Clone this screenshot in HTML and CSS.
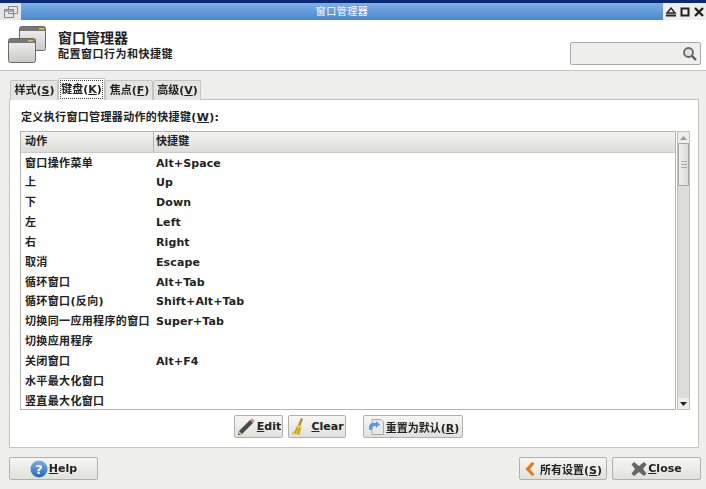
FILE: index.html
```html
<!DOCTYPE html>
<html lang="zh">
<head>
<meta charset="utf-8">
<title>窗口管理器</title>
<link rel="stylesheet" href="styles.css">
</head>
<body>
<div class="window">
  <div class="titlebar">
    <div class="tb-menu"><svg width="16" height="14" viewBox="0 0 16 14"><path d="M5.500 1.500h9v7h-9zM1.500 4.500h9v8h-9z" fill="none" stroke="#888" stroke-width="1"/><path d="M2 5h8v2H2z" fill="#aaa"/></svg></div>
    <div class="tb-title">窗口管理器</div>
    <div class="tb-btns">
      <svg width="12" height="12" viewBox="0 0 12 12"><path d="M6 2l4 5H2z" fill="none" stroke="#222" stroke-width="1.400"/><path d="M1 9.500h10" stroke="#222" stroke-width="2"/></svg>
      <svg width="12" height="12" viewBox="0 0 12 12"><path d="M2.500 2.500h7v7h-7z" fill="none" stroke="#222" stroke-width="2"/></svg>
      <svg width="12" height="12" viewBox="0 0 12 12"><path d="M2 2l8 8M10 2l-8 8" stroke="#222" stroke-width="2.400"/></svg>
    </div>
  </div>
  <header class="head">
    <svg class="head-icon" width="38" height="37" viewBox="0 0 38 37">
      <defs><linearGradient id="win" x1="0" y1="0" x2="0" y2="1"><stop offset="0" stop-color="#f4f4f2"/><stop offset="1" stop-color="#c8c8c6"/></linearGradient></defs>
      <rect x="11.500" y="0.500" width="26" height="24" rx="2" fill="url(#win)" stroke="#6a6a6a"/>
      <rect x="12" y="1" width="25" height="4" fill="#777"/>
      <rect x="31" y="2" width="5" height="1.500" fill="#e0c050"/>
      <rect x="0.500" y="12.500" width="27" height="24" rx="2" fill="url(#win)" stroke="#6a6a6a"/>
      <rect x="1" y="13" width="26" height="4" fill="#777"/>
      <rect x="20" y="14" width="5" height="1.500" fill="#e0c050"/>
    </svg>
    <div class="head-text">
      <div class="head-title">窗口管理器</div>
      <div class="head-sub">配置窗口行为和快捷键</div>
    </div>
    <div class="search">
      <svg width="15" height="15" viewBox="0 0 15 15"><circle cx="6.500" cy="6.500" r="4.500" fill="#dfe3e8" stroke="#666" stroke-width="1.800"/><path d="M10 10l4 4" stroke="#555" stroke-width="2.200"/></svg>
    </div>
  </header>
  <main class="content">
    <nav class="tabs">
      <div class="tab">样式(<u>S</u>)</div>
      <div class="tab tab-active"><span class="tab-focus">键盘(<u>K</u>)</span></div>
      <div class="tab">焦点(<u>F</u>)</div>
      <div class="tab">高级(<u>V</u>)</div>
    </nav>
    <section class="panel">
      <div class="panel-label">定义执行窗口管理器动作的快捷键(<u>W</u>):</div>
      <div class="tree-wrap">
        <div class="tree">
          <div class="tree-head">
            <div class="col-a th">动作</div>
            <div class="col-b th">快捷键</div>
          </div>
          <div class="row"><div class="col-a">窗口操作菜单</div><div class="col-b">Alt+Space</div></div>
          <div class="row"><div class="col-a">上</div><div class="col-b">Up</div></div>
          <div class="row"><div class="col-a">下</div><div class="col-b">Down</div></div>
          <div class="row"><div class="col-a">左</div><div class="col-b">Left</div></div>
          <div class="row"><div class="col-a">右</div><div class="col-b">Right</div></div>
          <div class="row"><div class="col-a">取消</div><div class="col-b">Escape</div></div>
          <div class="row"><div class="col-a">循环窗口</div><div class="col-b">Alt+Tab</div></div>
          <div class="row"><div class="col-a">循环窗口(反向)</div><div class="col-b">Shift+Alt+Tab</div></div>
          <div class="row"><div class="col-a">切换同一应用程序的窗口</div><div class="col-b">Super+Tab</div></div>
          <div class="row"><div class="col-a">切换应用程序</div><div class="col-b"></div></div>
          <div class="row"><div class="col-a">关闭窗口</div><div class="col-b">Alt+F4</div></div>
          <div class="row"><div class="col-a">水平最大化窗口</div><div class="col-b"></div></div>
          <div class="row"><div class="col-a">竖直最大化窗口</div><div class="col-b"></div></div>
        </div>
        <div class="scrollbar">
          <div class="sb-btn"><svg width="7" height="4" viewBox="0 0 7 4"><path d="M3.500 0L7 4H0z" fill="#999"/></svg></div>
          <div class="sb-thumb"><span></span><span></span><span></span></div>
          <div class="sb-track"></div>
          <div class="sb-btn"><svg width="7" height="4" viewBox="0 0 7 4"><path d="M0 0h7L3.500 4z" fill="#222"/></svg></div>
        </div>
      </div>
      <div class="actions">
        <button class="btn btn-edit"><svg width="20" height="20" viewBox="0 0 20 20"><path d="M3 14L14 3l3 3L6 17l-4 1z" fill="#4a4a48"/><path d="M14 3l2-1.500 2.500 2.500L17 6z" fill="#d97aa8"/><path d="M2 18l1-4 3 3z" fill="#e0c090"/><path d="M2 18l1-1.500 1 1z" fill="#222"/></svg><span><u>E</u>dit</span></button>
        <button class="btn btn-clear"><svg width="18" height="20" viewBox="0 0 18 20"><path d="M11 1l2 1-2.500 7-2.500-1z" fill="#b98a3a"/><path d="M7 8l4.500 2L10 18l-9-1c3-2 5-5 6-9z" fill="#e8c040"/><path d="M5 16l2-5M8 17l1.500-6" stroke="#b98a20"/></svg><span><u>C</u>lear</span></button>
        <button class="btn btn-reset"><svg width="18" height="18" viewBox="0 0 18 18"><path d="M5 1.500h9l2.500 2.500v12.500H5z" fill="#e8e8e8" stroke="#aaa"/><path d="M2 9c0-3 3-5 7-4V3l4 3.500L9 10V8C6 8 5 9 5 12H2z" fill="#5a9ad5"/></svg><span>重置为默认(<u>R</u>)</span></button>
      </div>
    </section>
    <footer class="foot">
      <button class="btn btn-help"><svg width="18" height="18" viewBox="0 0 18 18"><defs><linearGradient id="hb" x1="0" y1="0" x2="0" y2="1"><stop offset="0" stop-color="#7ab0e4"/><stop offset="1" stop-color="#2a66b4"/></linearGradient></defs><circle cx="9" cy="9" r="8.500" fill="url(#hb)"/><text class="q" x="9" y="13.500" text-anchor="middle">?</text></svg><span><u>H</u>elp</span></button>
      <div class="foot-gap"></div>
      <button class="btn btn-all"><svg width="12" height="16" viewBox="0 0 12 16"><path d="M8 1L1.500 8 8 15l2.500-1.500L6 8l4.500-5.500z" fill="#e07a20"/></svg><span>所有设置(<u>S</u>)</span></button>
      <button class="btn btn-close"><svg width="16" height="16" viewBox="0 0 16 16"><path d="M3 1l5 4 5-4 2.500 2.500L12 8l3.500 4.500L13 15l-5-4-5 4-2.500-2.500L4 8 .5 3.500z" fill="#666"/></svg><span><u>C</u>lose</span></button>
    </footer>
  </main>
</div>
</body>
</html>
```
FILE: styles.css
```css
* { box-sizing: border-box; }
html, body { margin: 0; padding: 0; }
body {
  width: 706px;
  height: 489px;
  overflow: hidden;
  font-family: "DejaVu Sans", "Noto Sans CJK SC", sans-serif;
  font-size: 11px;
  color: #222;
  background: #eeeeec;
}
.window { display: flex; flex-direction: column; height: 489px; filter: blur(0.3px); }
.titlebar {
  height: 20px;
  flex: none;
  display: flex;
  align-items: stretch;
  border-top: 3px solid #0a2a78;
  background: linear-gradient(#7fb0e6, #4a86d0);
}
.tb-menu {
  width: 21px;
  display: flex;
  align-items: center;
  justify-content: center;
  background: #e4e6ea;
}
.tb-title {
  flex: 1;
  text-align: center;
  color: #fff;
  font-size: 10px;
  letter-spacing: 0.500px;
  line-height: 17px;
}
.tb-btns {
  width: 43px;
  display: flex;
  align-items: center;
  justify-content: space-between;
  padding: 0 1px 0 2px;
  background: #eeeeec;
}
.head {
  height: 51px;
  flex: none;
  display: flex;
  align-items: flex-start;
  background: #fff;
  border-bottom: 1px solid #c4c4c0;
  padding: 6px 5px 0 8px;
}
.head-icon { flex: none; margin-right: 12px; }
.head-text { flex: 1; font-weight: bold; padding-top: 4px; }
.head-title { font-size: 14px; line-height: 17px; }
.head-sub { font-size: 11px; line-height: 15px; letter-spacing: 0.500px; }
.search {
  width: 131px;
  height: 23px;
  margin-top: 16px;
  flex: none;
  display: flex;
  align-items: center;
  justify-content: flex-end;
  padding-right: 3px;
  background: #eeeeec;
  border: 1px solid #a8a8a4;
  border-radius: 2px;
}
.content {
  flex: 1;
  display: flex;
  flex-direction: column;
  padding: 8px 5px 8px 9px;
  min-height: 0;
}
.tabs {
  height: 21px;
  flex: none;
  display: flex;
  align-items: flex-end;
  position: relative;
  z-index: 1;
  margin-bottom: -1px;
  padding-left: 1px;
}
.tab {
  width: 48px;
  height: 20px;
  padding-left: 1px;
  font-weight: bold;
  line-height: 20px;
  text-align: center;
  white-space: nowrap;
  background: #e4e4e1;
  border: 1px solid #c4c4c0;
  border-bottom: none;
  border-radius: 2px 2px 0 0;
}
.tab-active {
  height: 22px;
  width: 47px;
  background: #fff;
  padding: 1px 1px 0;
  position: relative;
  z-index: 1;
}
.tab-focus {
  display: block;
  height: 19px;
  line-height: 18px;
  border: 1px dotted #444;
}
.panel {
  width: 690px;
  height: 349px;
  flex: none;
  display: flex;
  flex-direction: column;
  background: #fff;
  border: 1px solid #c4c4c0;
  padding: 10px 8px 0 10px;
}
.panel-label {
  height: 21px;
  line-height: 15px;
  font-weight: bold;
  letter-spacing: 0.350px;
  padding-left: 1px;
  flex: none;
}
.tree-wrap {
  height: 279px;
  flex: none;
  display: flex;
}
.tree {
  width: 656px;
  flex: none;
  border: 1px solid #b4b4b0;
  overflow: hidden;
  font-weight: bold;
}
.tree-head {
  height: 21px;
  display: flex;
  background: linear-gradient(#f4f4f2, #dcdcd8);
  border-bottom: 1px solid #c8c8c4;
}
.th { line-height: 20px; }
.th.col-a { border-right: 1px solid #b4b4b0; }
.row { height: 19.850px; display: flex; line-height: 19px; padding-top: 0.500px; }
.col-a {
  width: 133px;
  flex: none;
  padding-left: 4px;
  letter-spacing: 0.350px;
  white-space: nowrap;
}
.col-b { flex: 1; padding-left: 2px; letter-spacing: 0.100px; }
.scrollbar {
  width: 13px;
  margin-left: 1px;
  flex: none;
  display: flex;
  flex-direction: column;
  background: #dcdcd8;
  border: 1px solid #c0c0bc;
}
.sb-btn {
  height: 11px;
  flex: none;
  display: flex;
  align-items: center;
  justify-content: center;
  background: #eeeeec;
}
.sb-thumb {
  height: 43px;
  flex: none;
  display: flex;
  flex-direction: column;
  align-items: center;
  justify-content: center;
  gap: 2px;
  background: linear-gradient(90deg, #f0f0ee, #dcdcd8);
  border: 1px solid #a8a8a4;
}
.sb-thumb span { width: 6px; height: 1px; background: #aaa; }
.sb-track { flex: 1; }
.actions {
  height: 38px;
  flex: none;
  display: flex;
  align-items: flex-start;
  padding-left: 214px;
  padding-top: 5px;
}
.btn {
  display: flex;
  align-items: center;
  justify-content: center;
  height: 23px;
  padding: 0;
  font: bold 11px "DejaVu Sans", "Noto Sans CJK SC", sans-serif;
  color: #222;
  background: linear-gradient(#f6f6f4, #e0e0dc);
  border: 1px solid #b0b0ac;
  border-radius: 2px;
}
.btn-edit { width: 49px; gap: 1px; }
.btn-clear { width: 58px; margin-left: 5px; gap: 3px; }
.btn-reset { width: 100px; margin-left: 17px; gap: 1px; }
.foot {
  flex: 1;
  display: flex;
  align-items: flex-start;
  padding: 9px 0 0;
}
.foot .btn { height: 23px; }
.btn-help { width: 89px; gap: 1px; }
.foot-gap { flex: 1; }
.btn-all { width: 88px; gap: 4px; }
.btn-close { width: 89px; margin-left: 5px; gap: 1px; }
.q { fill: #fff; font: bold 13px "DejaVu Sans", sans-serif; }
```
